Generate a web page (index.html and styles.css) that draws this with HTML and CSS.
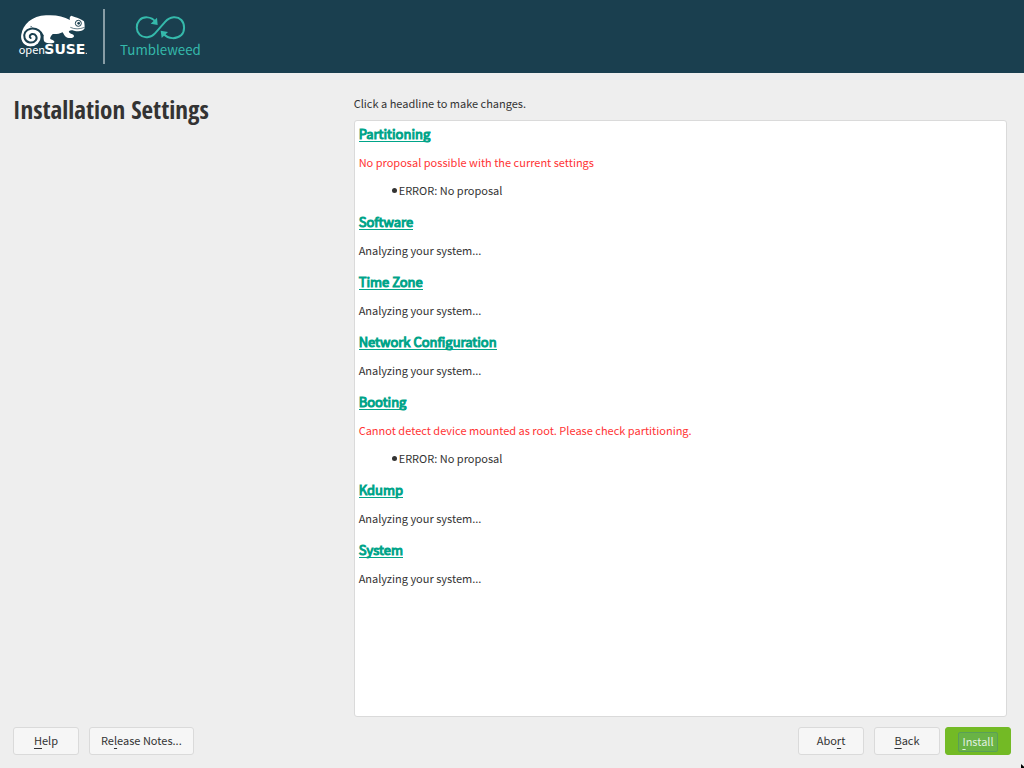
FILE: index.html
```html
<!DOCTYPE html>
<html lang="en">
<head>
<meta charset="utf-8">
<title>Installation Settings</title>
<link rel="stylesheet" href="styles.css">
</head>
<body>
<header class="banner">
  <svg class="brand" viewBox="0 0 600 216" role="img" aria-label="openSUSE Tumbleweed">
    <path class="white" d="M62 124 C42 122 32 110 34 90 C38 58 66 33 108 31 C138 29 160 34 180 45 C178 39 179 34 184 32 C197 37 211 40 222 49 C224 57 224 64 224 70 C220 79 205 80 192 77 C180 74 175 78 177 82 C180 87 190 87 192 92 C193 98 185 100 176 99 C166 98 163 90 158 82 C148 87 136 88 128 87 C124 92 118 99 122 103 C127 106 134 106 133 112 C131 116 112 116 106 112 C99 108 102 98 100 90 C96 86 92 84 90 84 L62 62 Z"/>
    <circle class="white" cx="63" cy="95" r="29"/>
    <path class="spiral" d="M98 92 C91 76 77 69 62 71 C47 74 39 87 44 100 C49 114 68 117 77 106 C84 97 77 86 66 87 C59 89 57 96 62 99"/>
    <circle class="eye" cx="205" cy="55" r="9"/>
    <circle class="navy" cx="206" cy="55" r="4"/>
    <path class="mouth" d="M181 67 C194 73 208 73 224 67"/>
    <text class="open" x="26" y="148">open</text>
    <text class="suse" x="103" y="148">SUSE</text>
    <circle class="white" cx="229" cy="145" r="2"/>
    <path class="rule" d="M282 12 V177"/>
    <path class="loop" d="M436 50 C424 34 400 33 388 46 C377 59 378 78 389 89 C402 102 423 98 435 85 L466 50 C480 34 502 33 514 45 C525 57 525 79 514 90 C500 103 475 103 461 87"/>
    <path class="teal" d="M441 38 L443 60 L422 56 Z M452 77 L455 99 L474 81 Z"/>
    <text class="tumble" x="330" y="151">Tumbleweed</text>
  </svg>
</header>
<main class="content">
  <h1 class="title">Installation Settings</h1>
  <section class="settings">
    <p class="hint">Click a headline to make changes.</p>
    <div class="panel">
      <h2 class="headline"><a href="#">Partitioning</a></h2>
      <p class="error">No proposal possible with the current settings</p>
      <ul class="list"><li>ERROR: No proposal</li></ul>
      <h2 class="headline"><a href="#">Software</a></h2>
      <p class="status">Analyzing your system...</p>
      <h2 class="headline"><a href="#">Time Zone</a></h2>
      <p class="status">Analyzing your system...</p>
      <h2 class="headline"><a href="#">Network Configuration</a></h2>
      <p class="status">Analyzing your system...</p>
      <h2 class="headline"><a href="#">Booting</a></h2>
      <p class="error">Cannot detect device mounted as root. Please check partitioning.</p>
      <ul class="list"><li>ERROR: No proposal</li></ul>
      <h2 class="headline"><a href="#">Kdump</a></h2>
      <p class="status">Analyzing your system...</p>
      <h2 class="headline"><a href="#">System</a></h2>
      <p class="status">Analyzing your system...</p>
    </div>
  </section>
</main>
<footer class="actions">
  <button class="btn" type="button"><span><u>H</u>elp</span></button>
  <button class="btn notes" type="button"><span>Re<u>l</u>ease Notes...</span></button>
  <span class="spacer"></span>
  <button class="btn abort" type="button"><span>Abo<u>r</u>t</span></button>
  <button class="btn back" type="button"><span><u>B</u>ack</span></button>
  <button class="btn primary" type="button"><span class="focus"><u>I</u>nstall</span></button>
</footer>
<svg class="cursor" viewBox="0 0 12 18" aria-hidden="true"><path d="M0 0 V15 L4 11 L7 17 L9 16 L6 10 H11 Z"/></svg>
</body>
</html>
```
FILE: styles.css
```css
* { box-sizing: border-box; }
html, body { height: 100%; }
body {
  margin: 0;
  display: flex;
  flex-direction: column;
  overflow: hidden;
  background: #eeeeee;
  color: #333333;
  font: 11px/20px "Noto Sans CJK SC", "Noto Sans", sans-serif;
}
h1, h2, p, ul { margin: 0; padding: 0; }
.banner {
  flex: none;
  height: 73px;
  padding: 5px 0 0 10px;
  background: #1a3f4f;
}
.brand { display: block; width: 200px; height: 72px; overflow: visible; }
.white { fill: #ffffff; }
.navy { fill: #1a3f4f; }
.teal { fill: #35b9ab; }
.spiral { fill: none; stroke: #1a3f4f; stroke-width: 6; stroke-linecap: round; }
.eye { fill: #ffffff; stroke: #1a3f4f; stroke-width: 3; }
.mouth { fill: none; stroke: #1a3f4f; stroke-width: 2; }
.rule { stroke: #9fb0b7; stroke-width: 5; }
.loop { fill: none; stroke: #35b9ab; stroke-width: 6; }
.open { fill: #ffffff; font: 33px "Noto Sans CJK SC", sans-serif; }
.suse { fill: #ffffff; font: bold 42px "DejaVu Sans", sans-serif; }
.tumble { fill: #35b9ab; font: 40px "Noto Sans CJK SC", sans-serif; }

.content {
  flex: 1;
  min-height: 0;
  display: grid;
  grid-template-columns: 1fr 2fr;
  gap: 14px;
  padding: 20px 17px 0 13px;
}
.title { font: bold 25px/32px "Open Sans Condensed", "Open Sans", sans-serif; }
.settings { display: flex; flex-direction: column; min-width: 0; min-height: 0; }
.hint { padding-bottom: 7px; }
.panel {
  flex: 1;
  min-height: 0;
  overflow: auto;
  padding: 3px 4px;
  background: #ffffff;
  border: 1px solid #dadada;
  border-radius: 3px;
}
.headline { font-size: 13px; font-weight: 400; line-height: 20px; margin-bottom: 8px; }
.headline a {
  color: #00a489;
  text-decoration: none;
  border-bottom: 1px solid #00a489;
  display: inline-block;
  height: 18px;
  line-height: 19px;
  -webkit-text-stroke: 1px #00a489;
  vertical-align: top;
}
.status, .error { margin-bottom: 12px; }
.error { color: #ff3434; margin-bottom: 8px; }
.list { margin-bottom: 12px; padding-left: 33px; list-style: none; }
.list li { display: flex; align-items: center; gap: 2px; }
.list li::before { content: ""; width: 5px; height: 5px; border-radius: 50%; background: #333333; }

.actions { flex: none; display: flex; padding: 10px 13px 13px; }
.btn {
  min-width: 66px;
  height: 28px;
  padding: 0 12px 2px;
  background: #f6f6f6;
  border: 1px solid #dadada;
  border-radius: 3px;
  color: #333333;
  font: inherit;
}
.btn u { text-underline-offset: 3px; }
.notes, .back { margin-left: 10px; }
.notes { padding: 0 11px 2px; }
.primary { margin-left: 5px; padding: 0 12px; background: #73ba25; border-color: #73ba25; color: #e0f0e0; }
.focus { display: inline-block; padding: 0 3px 2px; line-height: 16px; border: 1px solid #5a9f58; border-radius: 2px; background: #69b345; }
.spacer { flex: 1; }
.cursor { position: absolute; right: -9px; bottom: -14px; width: 12px; height: 18px; }
```
